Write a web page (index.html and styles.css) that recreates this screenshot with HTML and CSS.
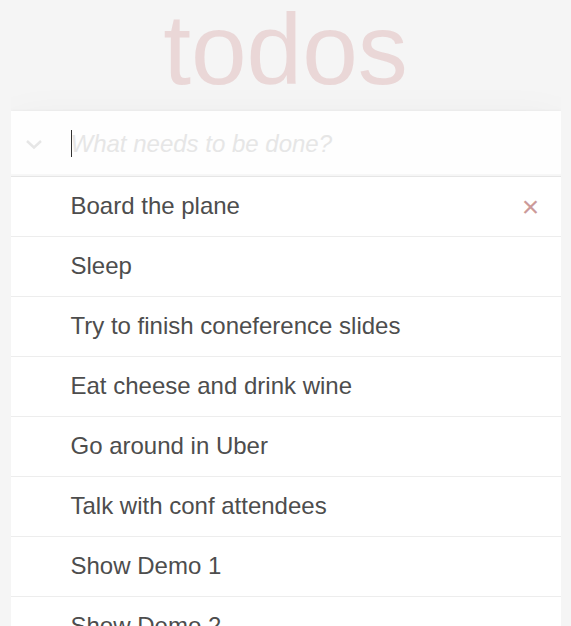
FILE: index.html
```html
<!DOCTYPE html>
<html lang="en">
<head>
<meta charset="utf-8">
<title>todos</title>
<link rel="stylesheet" href="styles.css">
</head>
<body>
<section class="todoapp">
  <h1 class="title">todos</h1>
  <div class="card">
    <header class="new-row">
      <label class="toggle-all" aria-label="Mark all as complete">
        <svg width="18" height="12" viewBox="0 0 18 12"><polyline points="2,3 9,9.5 16,3" fill="none" stroke="#e6e6e6" stroke-width="2.4"/></svg>
      </label>
      <input class="new-todo" placeholder="What needs to be done?">
      <span class="caret"></span>
    </header>
    <ul class="todo-list">
      <li class="todo hover"><label>Board the plane</label><button class="destroy">×</button></li>
      <li class="todo"><label>Sleep</label><button class="destroy">×</button></li>
      <li class="todo"><label>Try to finish coneference slides</label><button class="destroy">×</button></li>
      <li class="todo"><label>Eat cheese and drink wine</label><button class="destroy">×</button></li>
      <li class="todo"><label>Go around in Uber</label><button class="destroy">×</button></li>
      <li class="todo"><label>Talk with conf attendees</label><button class="destroy">×</button></li>
      <li class="todo"><label>Show Demo 1</label><button class="destroy">×</button></li>
      <li class="todo"><label>Show Demo 2</label><button class="destroy">×</button></li>
    </ul>
  </div>
</section>
</body>
</html>
```
FILE: styles.css
```css
html, body {
  margin: 0;
  padding: 0;
}
body {
  font-family: "Liberation Sans", Arial, sans-serif;
  background: #f5f5f5;
  color: #4d4d4d;
  max-width: 550px;
  min-width: 230px;
  margin: 0 auto;
}
.todoapp {
  display: flex;
  flex-direction: column;
}
.title {
  margin: 0 0 13px;
  font-size: 100px;
  line-height: 98px;
  height: 98px;
  font-weight: 100;
  text-align: center;
  color: rgba(175, 47, 47, 0.15);
}
.card {
  background: #fff;
  box-shadow: 0 2px 4px 0 rgba(0,0,0,0.2), 0 25px 50px 0 rgba(0,0,0,0.1);
}
.new-row {
  position: relative;
  display: flex;
}
.toggle-all {
  position: absolute;
  left: 14px;
  top: 27px;
  width: 18px;
  height: 12px;
  display: block;
}
.toggle-all svg { display: block; }
.new-todo {
  flex: 1;
  margin: 0;
  border: 0;
  outline: none;
  padding: 16px 16px 16px 60px;
  font-family: inherit;
  font-size: 24px;
  line-height: 33px;
  height: 65px;
  box-sizing: border-box;
  color: #4d4d4d;
  background: rgba(0,0,0,0.003);
  box-shadow: inset 0 -2px 1px rgba(0,0,0,0.03);
}
.new-todo::placeholder {
  font-style: italic;
  font-weight: 300;
  color: #e6e6e6;
}
.caret {
  position: absolute;
  left: 60px;
  top: 19px;
  width: 1px;
  height: 27px;
  background: #333;
}
.todo-list {
  margin: 0;
  padding: 0;
  list-style: none;
  border-top: 1px solid #e6e6e6;
}
.todo {
  position: relative;
  display: flex;
  align-items: center;
  font-size: 24px;
  border-bottom: 1px solid #ededed;
}
.todo label {
  flex: 1;
  margin-left: 45px;
  padding: 14px 60px 16px 15px;
  line-height: 29px;
  font-weight: 400;
  color: #4d4d4d;
}
.destroy {
  position: absolute;
  top: 0;
  bottom: 0;
  right: 10px;
  width: 40px;
  height: 40px;
  margin: auto 0;
  padding: 0;
  border: 0;
  background: none;
  font-family: inherit;
  font-size: 30px;
  line-height: 40px;
  color: #cc9a9a;
  display: none;
}
.todo.hover .destroy { display: block; }
```
